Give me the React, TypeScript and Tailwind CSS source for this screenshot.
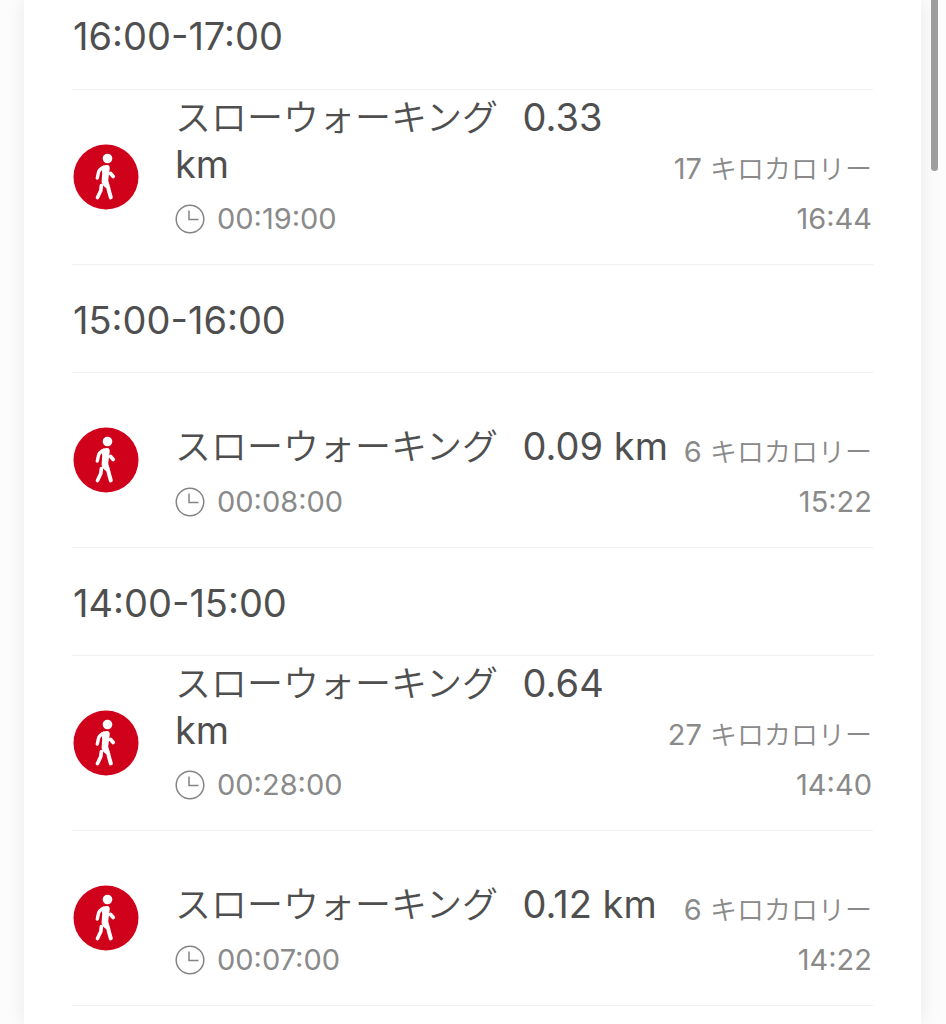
type Activity = {
  distance: string;
  duration: string;
  calories: number;
  time: string;
};

type HourGroup = {
  range: string;
  activities: Activity[];
};

const GROUPS: HourGroup[] = [
  {
    range: "16:00-17:00",
    activities: [
      { distance: "0.33", duration: "00:19:00", calories: 17, time: "16:44" },
    ],
  },
  {
    range: "15:00-16:00",
    activities: [
      { distance: "0.09", duration: "00:08:00", calories: 6, time: "15:22" },
    ],
  },
  {
    range: "14:00-15:00",
    activities: [
      { distance: "0.64", duration: "00:28:00", calories: 27, time: "14:40" },
      { distance: "0.12", duration: "00:07:00", calories: 6, time: "14:22" },
    ],
  },
];

function WalkIcon() {
  return (
    <svg viewBox="0 0 66 66" className="size-[66px] shrink-0" aria-hidden="true">
      <circle cx="33" cy="33" r="32.5" fill="#d0021b" />
      <circle cx="34.5" cy="14.5" r="4.8" fill="#fff" />
      <path
        d="M28.5 22.5 Q31 20.7 34.2 20.9 Q37 21.2 36.7 24.5 L35.2 36.5 L36.6 41.5 L32.6 43.8 Q28.6 40.5 28.6 37.5 L29.2 29 Z"
        fill="#fff"
      />
      <g fill="none" stroke="#fff" strokeLinecap="round" strokeLinejoin="round">
        <path d="M30.6 23.2 Q26.2 25.2 25.6 28 L24.3 34" strokeWidth="3.4" />
        <path d="M37.6 29.4 L40.2 32.4" strokeWidth="3.8" />
        <path d="M34.3 41.5 Q35.6 44 36 47 L37.8 53.4" strokeWidth="4" />
        <path d="M28.4 41.5 L27.8 46.5 L24.5 53.6" strokeWidth="3.6" />
      </g>
    </svg>
  );
}

function ClockIcon() {
  return (
    <svg
      viewBox="0 0 30 30"
      className="size-[30px] shrink-0"
      fill="none"
      stroke="#848484"
      strokeWidth="1.5"
      aria-hidden="true"
    >
      <circle cx="15" cy="15" r="13.8" />
      <path d="M14 6.5 V15.5 H23.5" />
    </svg>
  );
}

function ActivityRow({ distance, duration, calories, time }: Activity) {
  return (
    <li className="flex min-h-[175px] items-center border-b border-[#f0f0f0] px-px">
      <WalkIcon />
      <div className="ml-9 flex flex-1 items-end gap-3 self-stretch pb-[25px]">
        <div className="flex-1">
          <p className="text-[38px] leading-[46px] text-[#4f4f4f]">
            <span className="mr-3.5 text-[36px] font-[350]">スローウォーキング</span>{" "}
            {distance} km
          </p>
          <p className="mt-3 flex items-center gap-3 text-[29px] leading-10 text-[#8a8a8a]">
            <ClockIcon />
            {duration}
          </p>
        </div>
        <div className="shrink-0 text-right text-[29px] leading-10 text-[#8a8a8a]">
          <p className="mb-[9px]">
            {calories} <span className="text-[27px] font-[350]">キロカロリー</span>
          </p>
          <p>{time}</p>
        </div>
      </div>
    </li>
  );
}

export default function App() {
  return (
    <div className="relative min-h-screen overflow-hidden bg-[#fcfcfc] pr-[25px] pl-6 font-['Inter','Noto_Sans_CJK_JP',sans-serif]">
      <main className="min-h-screen bg-white px-12 shadow-[0_0_20px_rgba(0,0,0,0.08)]">
        {GROUPS.map((group, idx) => (
          <section key={group.range}>
            <h2
              className={`border-b border-[#f0f0f0] pl-px text-[38px] leading-[46px] text-[#4f4f4f] ${
                idx === 0 ? "pt-[13px] pb-[30px]" : "pt-8 pb-[29px]"
              }`}
            >
              {group.range}
            </h2>
            <ul>
              {group.activities.map((activity) => (
                <ActivityRow key={activity.time} {...activity} />
              ))}
            </ul>
          </section>
        ))}
      </main>
      {/* Scroll position thumb */}
      <div className="absolute top-0 right-2 h-[171px] w-[7px] rounded-b-full bg-[#9e9e9e]" />
    </div>
  );
}
